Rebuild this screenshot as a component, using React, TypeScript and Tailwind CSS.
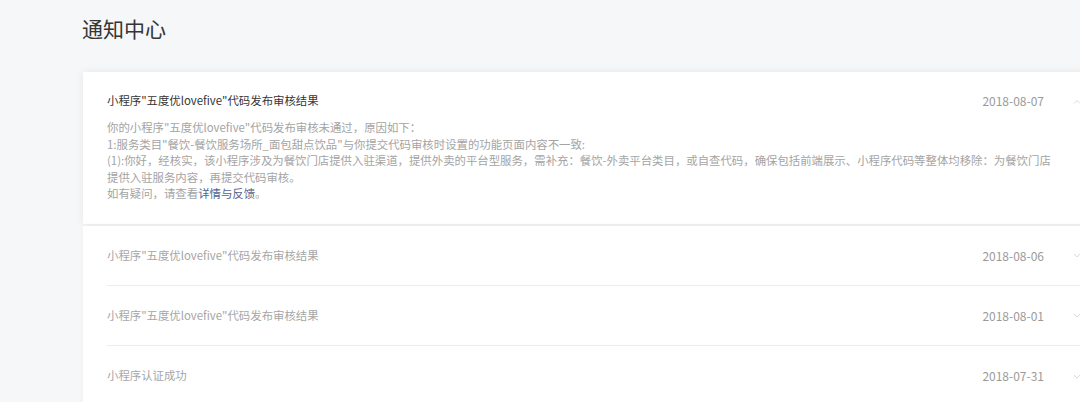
const font = { fontFamily: '"Noto Sans CJK SC", "Liberation Sans", sans-serif' };

const Caret = ({ up }: { up?: boolean }) => (
  <svg width="8" height="5" viewBox="0 0 8 5" className="text-[#dadada]">
    <path
      d={up ? "M1 4.5 L4 1.5 L7 4.5" : "M1 1 L4 4 L7 1"}
      fill="none"
      stroke="currentColor"
      strokeWidth="1"
    />
  </svg>
);

const rows = [
  { title: "小程序\"五度优lovefive\"代码发布审核结果", date: "2018-08-06" },
  { title: "小程序\"五度优lovefive\"代码发布审核结果", date: "2018-08-01" },
  { title: "小程序认证成功", date: "2018-07-31" },
];

export default function App() {
  return (
    <div
      className="w-[1080px] h-[402px] overflow-hidden bg-[#f6f7f9] pl-[83px]"
      style={font}
    >
      <h1 className="pt-[14px] h-[72px] text-[21px] leading-[28px] text-[#353535] -ml-[1px]">
        通知中心
      </h1>
      <div className="w-[1010px]">
        <section className="bg-white shadow-[0_0_8px_rgba(0,0,0,0.07)] h-[152px] pl-6 pt-[20px]">
          <div className="flex items-center h-[18px]">
            <div className="flex-1 text-[11.4px] text-[#353535]">小程序"五度优lovefive"代码发布审核结果</div>
            <div className="text-[#9a9a9a] text-[12px]">2018-08-07</div>
            <div className="w-[49px] flex justify-end pr-[12px]">
              <Caret up />
            </div>
          </div>
          <div className="mt-[9px] text-[11.4px] leading-[16.5px] text-[#a4a4a4] whitespace-nowrap">
            你的小程序"五度优lovefive"代码发布审核未通过，原因如下：
            <br />
            1:服务类目"餐饮-餐饮服务场所_面包甜点饮品"与你提交代码审核时设置的功能页面内容不一致:
            <br />
            (1):你好，经核实，该小程序涉及为餐饮门店提供入驻渠道，提供外卖的平台型服务，需补充：餐饮-外卖平台类目，或自查代码，确保包括前端展示、小程序代码等整体均移除：为餐饮门店
            <br />
            提供入驻服务内容，再提交代码审核。
            <br />
            如有疑问，请查看<span className="text-[#52658f]">详情与反馈</span>。
          </div>
        </section>
        <div className="mt-[2px] bg-white shadow-[0_0_6px_rgba(0,0,0,0.04)]">
          {rows.map((r, i) => (
            <div key={i} className="pl-6">
              <div
                className={
                  "flex items-center h-[60px] " +
                  (i < rows.length - 1 ? "border-b border-[#ececec]" : "")
                }
              >
                <div className="flex-1 text-[11.4px] text-[#a6a6a6]">{r.title}</div>
                <div className="text-[12px] text-[#9a9a9a]">{r.date}</div>
                <div className="w-[49px] flex justify-end pr-[12px]">
                  <Caret />
                </div>
              </div>
            </div>
          ))}
        </div>
      </div>
    </div>
  );
}
